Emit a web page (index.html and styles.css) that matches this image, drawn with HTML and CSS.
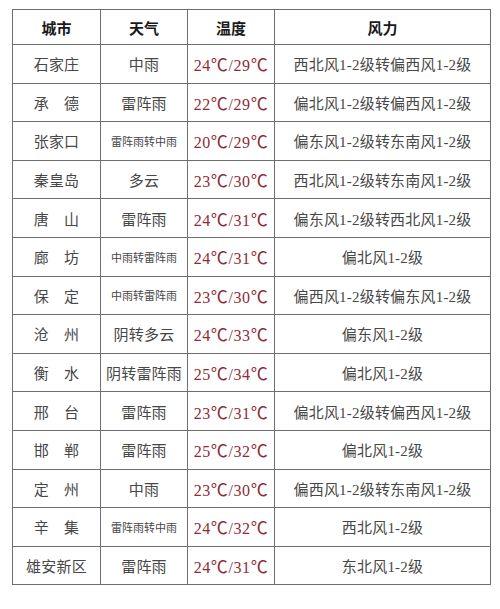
FILE: index.html
```html
<!DOCTYPE html>
<html lang="zh">
<head>
<meta charset="utf-8">
<title>天气</title>
<link rel="stylesheet" href="styles.css">
</head>
<body>
<table class="wx">
  <colgroup>
    <col class="c-city"><col class="c-weather"><col class="c-temp"><col class="c-wind">
  </colgroup>
  <thead>
    <tr><th>城市</th><th>天气</th><th>温度</th><th>风力</th></tr>
  </thead>
  <tbody>
    <tr><td>石家庄</td><td>中雨</td><td class="t">24<span class="u">℃</span>/29<span class="u">℃</span></td><td>西北风1-2级转偏西风1-2级</td></tr>
    <tr><td>承　德</td><td>雷阵雨</td><td class="t">22<span class="u">℃</span>/29<span class="u">℃</span></td><td>偏北风1-2级转偏西风1-2级</td></tr>
    <tr><td>张家口</td><td class="s">雷阵雨转中雨</td><td class="t">20<span class="u">℃</span>/29<span class="u">℃</span></td><td>偏东风1-2级转东南风1-2级</td></tr>
    <tr><td>秦皇岛</td><td>多云</td><td class="t">23<span class="u">℃</span>/30<span class="u">℃</span></td><td>西北风1-2级转东南风1-2级</td></tr>
    <tr><td>唐　山</td><td>雷阵雨</td><td class="t">24<span class="u">℃</span>/31<span class="u">℃</span></td><td>偏东风1-2级转西北风1-2级</td></tr>
    <tr><td>廊　坊</td><td class="s">中雨转雷阵雨</td><td class="t">24<span class="u">℃</span>/31<span class="u">℃</span></td><td>偏北风1-2级</td></tr>
    <tr><td>保　定</td><td class="s">中雨转雷阵雨</td><td class="t">23<span class="u">℃</span>/30<span class="u">℃</span></td><td>偏西风1-2级转偏东风1-2级</td></tr>
    <tr><td>沧　州</td><td>阴转多云</td><td class="t">24<span class="u">℃</span>/33<span class="u">℃</span></td><td>偏东风1-2级</td></tr>
    <tr><td>衡　水</td><td>阴转雷阵雨</td><td class="t">25<span class="u">℃</span>/34<span class="u">℃</span></td><td>偏北风1-2级</td></tr>
    <tr><td>邢　台</td><td>雷阵雨</td><td class="t">23<span class="u">℃</span>/31<span class="u">℃</span></td><td>偏北风1-2级转偏西风1-2级</td></tr>
    <tr><td>邯　郸</td><td>雷阵雨</td><td class="t">25<span class="u">℃</span>/32<span class="u">℃</span></td><td>偏北风1-2级</td></tr>
    <tr><td>定　州</td><td>中雨</td><td class="t">23<span class="u">℃</span>/30<span class="u">℃</span></td><td>偏西风1-2级转东南风1-2级</td></tr>
    <tr><td>辛　集</td><td class="s">雷阵雨转中雨</td><td class="t">24<span class="u">℃</span>/32<span class="u">℃</span></td><td>西北风1-2级</td></tr>
    <tr><td>雄安新区</td><td>雷阵雨</td><td class="t">24<span class="u">℃</span>/31<span class="u">℃</span></td><td>东北风1-2级</td></tr>
  </tbody>
</table>
</body>
</html>
```
FILE: styles.css
```css
html, body {
  margin: 0;
  padding: 0;
  background: #ffffff;
}
body {
  padding: 9px 0 0 12px;
  font-family: "Liberation Serif", "Noto Sans CJK SC", serif;
  color: #474747;
}
.wx {
  border-collapse: collapse;
  table-layout: fixed;
  width: 478px;
}
.c-city { width: 88px; }
.c-weather { width: 87px; }
.c-temp { width: 87px; }
.c-wind { width: 216px; }
.wx th, .wx td {
  border: 1px solid #6e6e6e;
  padding: 0;
  text-align: center;
  vertical-align: middle;
  white-space: nowrap;
  overflow: hidden;
}
.wx th {
  height: 34px;
  font-size: 15px;
  font-weight: bold;
  color: #1a1a1a;
}
.wx td {
  height: 37.6px;
  font-size: 15px;
  letter-spacing: 0.2px;
}
.wx td.s {
  font-size: 11px;
  letter-spacing: 0;
}
.wx td.t {
  color: #8e2b36;
  font-size: 16px;
  letter-spacing: 0.6px;
}
.wx .u {
  font-family: "Noto Sans CJK SC", sans-serif;
  font-size: 17px;
  font-weight: 400;
}
```
